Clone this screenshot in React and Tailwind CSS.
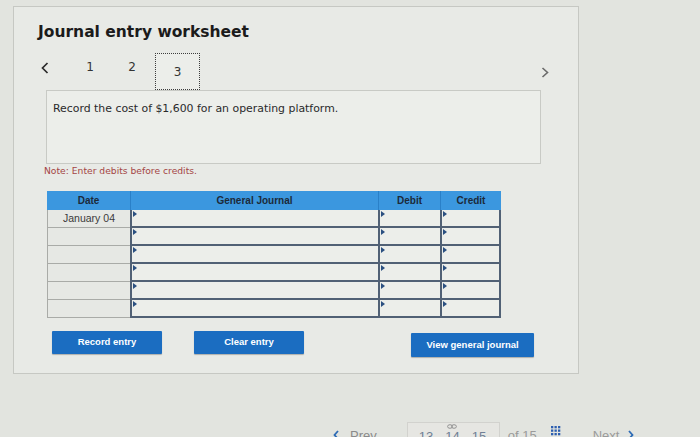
const rows = [0, 1, 2, 3, 4, 5];

function Marker() {
    return (
        <span className="absolute left-[1px] top-[1px] w-0 h-0 border-y-[3px] border-y-transparent border-l-[4px] border-l-[#2a4f80]" />
    );
}

function InputCell({ last }) {
    return (
        <div className={`relative bg-[#eceeea] border-l-2 border-b-2 border-[#516175] ${last ? "border-r-2" : ""}`}>
            <Marker />
        </div>
    );
}

export default function App() {
    return (
        <div className="w-[700px] h-[437px] overflow-hidden bg-[#e2e4df] font-['DejaVu_Sans',sans-serif] flex flex-col">
            {/* Worksheet panel */}
            <div className="pt-[6px] pl-[13px]">
                <div className="w-[566px] h-[368px] border border-[#c6c8c3] bg-[#e8eae6]">
                    <h1 className="pl-[24px] pt-[16px] text-[15.5px] leading-[18px] font-bold text-[#1b1b1b]">
                        Journal entry worksheet
                    </h1>

                    {/* Step nav */}
                    <div className="mt-[12px] h-[37px] flex items-start pl-[27px] pr-[29px]">
                        <svg width="8" height="12" viewBox="0 0 8 12" className="mt-[9px]">
                            <path d="M6.5 1 L1.5 6 L6.5 11" fill="none" stroke="#2b2b2b" strokeWidth="1.7" />
                        </svg>
                        <div className="ml-[20px] w-[42px] mt-[7px] text-center text-[12px] leading-[15px] text-[#333]">1</div>
                        <div className="w-[42px] mt-[7px] text-center text-[12px] leading-[15px] text-[#333]">2</div>
                        <div className="ml-[2px] w-[45px] h-[37px] border border-dotted border-[#3d3d3d] bg-[#eceeea] flex items-center justify-center text-[12px] text-[#333]">
                            3
                        </div>
                        <div className="flex-1" />
                        <svg width="8" height="11" viewBox="0 0 8 11" className="mt-[14px]">
                            <path d="M1.5 1 L6.5 5.5 L1.5 10" fill="none" stroke="#6a6a6a" strokeWidth="1.6" />
                        </svg>
                    </div>

                    {/* Question */}
                    <div className="ml-[32px] w-[495px] h-[74px] border border-[#c8cac5] bg-[#eceeea] pl-[6px] pt-[10px] text-[10.9px] leading-[15px] text-[#2a2a2a]">
                        Record the cost of $1,600 for an operating platform.
                    </div>

                    <p className="mt-[1px] ml-[30px] text-[9.2px] leading-[12px] text-[#a44545]">
                        Note: Enter debits before credits.
                    </p>

                    {/* Journal table */}
                    <div className="mt-[14px] ml-[33px] w-[454px] font-['Liberation_Sans',Arial,sans-serif]">
                        <div className="grid grid-cols-[83px_248px_62px_61px] h-[19px] bg-[#3b97df] text-[10px] font-bold text-[#1c2a3a]">
                            <div className="flex items-center justify-center">Date</div>
                            <div className="flex items-center justify-center border-l border-[#2a80c8]">General Journal</div>
                            <div className="flex items-center justify-center border-l border-[#2a80c8]">Debit</div>
                            <div className="flex items-center justify-center border-l border-[#2a80c8]">Credit</div>
                        </div>
                        {rows.map((r) => (
                            <div key={r} className="grid grid-cols-[83px_248px_62px_61px] h-[18px]">
                                <div className="bg-[#e6e8e4] border-l border-b border-[#a9aba7] flex items-center justify-center text-[10.5px] text-[#3a3a3a]">
                                    {r === 0 ? "January 04" : ""}
                                </div>
                                <InputCell />
                                <InputCell />
                                <InputCell last />
                            </div>
                        ))}
                    </div>

                    {/* Buttons */}
                    <div className="mt-[13px] pl-[38px] flex items-start font-['Liberation_Sans',Arial,sans-serif] text-[9.5px] font-bold text-white">
                        <button className="w-[110px] h-[23px] bg-[#1b6dc1] rounded-[1px] shadow-[0_1px_1px_rgba(0,0,0,0.25)]">
                            Record entry
                        </button>
                        <button className="ml-[32px] w-[110px] h-[23px] bg-[#1b6dc1] rounded-[1px] shadow-[0_1px_1px_rgba(0,0,0,0.25)]">
                            Clear entry
                        </button>
                        <button className="ml-[107px] mt-[2px] w-[123px] h-[24px] bg-[#1b6dc1] rounded-[1px] shadow-[0_1px_1px_rgba(0,0,0,0.25)]">
                            View general journal
                        </button>
                    </div>
                </div>
            </div>

            {/* Bottom pager, cut by the bottom edge as in the photo */}
            <div className="mt-[48px] pl-[333px] flex items-start font-['Liberation_Sans',Arial,sans-serif] text-[13px] leading-[16px]">
                <svg width="6" height="10" viewBox="0 0 6 10" className="mt-[8px]">
                    <path d="M5 1 L1.5 5 L5 9" fill="none" stroke="#2d6bb5" strokeWidth="1.8" />
                </svg>
                <span className="ml-[11px] mt-[6px] text-[#8a8a8a]">Prev</span>
                <div className="ml-[30px] w-[93px] h-[20px] border-t border-x border-[#d2d2ce] bg-[#e6e6e2] flex items-start text-[#6f7f95]">
                    <span className="ml-[11px] mt-[6px]">13</span>
                    <div className="ml-[12px] flex flex-col items-center">
                        <svg width="10" height="5" viewBox="0 0 10 5" className="mt-[1px]">
                            <ellipse cx="3" cy="2.5" rx="2.4" ry="1.8" fill="none" stroke="#8a8a8a" strokeWidth="0.9" />
                            <ellipse cx="7" cy="2.5" rx="2.4" ry="1.8" fill="none" stroke="#8a8a8a" strokeWidth="0.9" />
                        </svg>
                        <span>14</span>
                    </div>
                    <span className="ml-[12px] mt-[6px]">15</span>
                </div>
                <span className="ml-[8px] mt-[6px] text-[#9a9a9a]">of 15</span>
                <svg width="10" height="10" viewBox="0 0 10 10" className="ml-[14px] mt-[4px]">
                    {[1, 4.5, 8].map((y) =>
                        [1, 4.5, 8].map((x) => (
                            <rect key={`${x}-${y}`} x={x - 1} y={y - 1} width="2.3" height="2.3" fill="#2d5fb0" />
                        ))
                    )}
                </svg>
                <span className="ml-[32px] mt-[6px] text-[#9a9a9a]">Next</span>
                <svg width="6" height="10" viewBox="0 0 6 10" className="ml-[9px] mt-[8px]">
                    <path d="M1 1 L4.5 5 L1 9" fill="none" stroke="#2d6bb5" strokeWidth="1.8" />
                </svg>
            </div>
        </div>
    );
}
